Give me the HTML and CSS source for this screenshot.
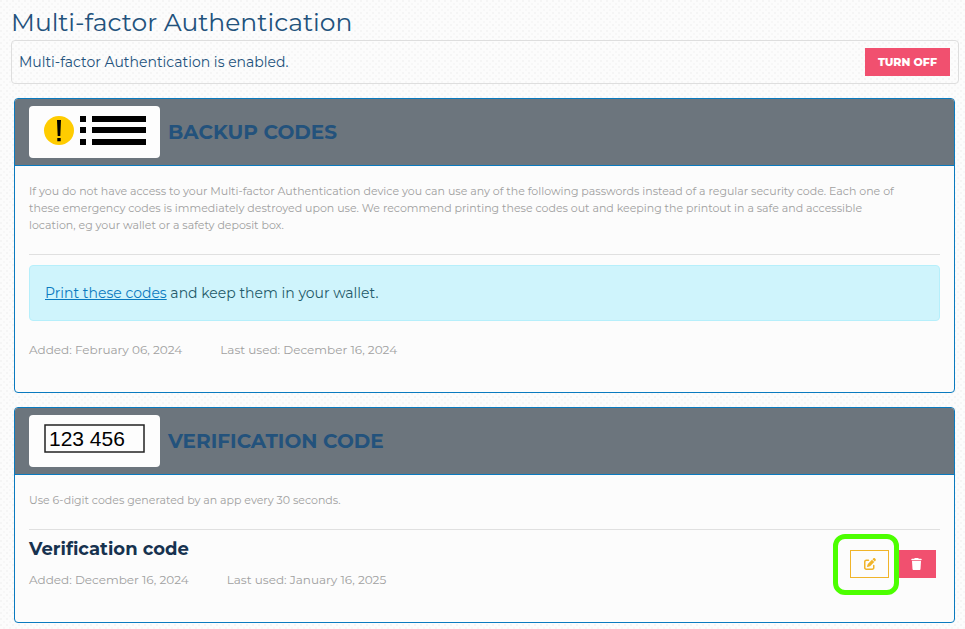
FILE: index.html
```html
<!DOCTYPE html>
<html lang="en">
<head>
<meta charset="utf-8">
<title>Multi-factor Authentication</title>
<link rel="stylesheet" href="styles.css">
</head>
<body>
<main class="page">
  <h1 class="page-title">Multi-factor Authentication</h1>
  <div class="status">
    <span>Multi-factor Authentication is enabled.</span>
    <button class="btn btn-danger" type="button">TURN OFF</button>
  </div>

  <section class="card">
    <header class="card-header">
      <svg class="logo" viewBox="0 0 131 52" aria-hidden="true">
        <ellipse cx="30" cy="24.500" rx="15" ry="14.500" fill="#fc0"/>
        <path d="M28 14h4l-.7 16h-2.600zM28.300 32h3.400v3.200h-3.400z"/>
        <path d="M51 10h6v6h-6zM51 21h6v6h-6zM51 33h6v6h-6zM63 10h54v6H63zM63 21h54v6H63zM63 33h54v6H63z"/>
      </svg>
      <h2 class="card-title">BACKUP CODES</h2>
    </header>
    <div class="card-body">
      <p class="description">If you do not have access to your Multi-factor Authentication device you can use any of the following passwords instead of a regular security code. Each one of these emergency codes is immediately destroyed upon use. We recommend printing these codes out and keeping the printout in a safe and accessible location, eg your wallet or a safety deposit box.</p>
      <hr class="divider">
      <p class="notice"><a href="#print">Print these codes</a> and keep them in your wallet.</p>
      <div class="dates"><span>Added: February 06, 2024</span><span>Last used: December 16, 2024</span></div>
    </div>
  </section>

  <section class="card">
    <header class="card-header">
      <svg class="logo" viewBox="0 0 131 52" aria-hidden="true">
        <rect x="16" y="10" width="99" height="27" fill="none" stroke="#222" stroke-width="1.500"/>
        <text class="logo-digits" x="20" y="31">123 456</text>
      </svg>
      <h2 class="card-title">VERIFICATION CODE</h2>
    </header>
    <div class="card-body">
      <p class="description">Use 6-digit codes generated by an app every 30 seconds.</p>
      <hr class="divider">
      <div class="method">
        <div>
          <h3 class="method-title">Verification code</h3>
          <div class="dates"><span>Added: December 16, 2024</span><span>Last used: January 16, 2025</span></div>
        </div>
        <div class="actions">
          <span class="highlighted">
            <button class="btn btn-icon btn-edit" type="button" aria-label="Edit">
              <svg viewBox="0 0 512 512" width="12" height="12" aria-hidden="true"><path fill="currentColor" d="M471.600 21.700c-21.900-21.900-57.300-21.900-79.200 0L362.300 51.700l97.900 97.900 30.100-30.100c21.900-21.900 21.900-57.300 0-79.200L471.600 21.700zm-299.200 220c-6.100 6.100-10.800 13.600-13.500 21.900l-29.600 88.800c-2.900 8.600-.6 18.100 5.800 24.600s15.900 8.700 24.600 5.800l88.800-29.600c8.200-2.700 15.700-7.400 21.900-13.500L437.700 172.300 339.700 74.300 172.400 241.700zM96 64c-53 0-96 43-96 96v256c0 53 43 96 96 96h256c53 0 96-43 96-96v-96c0-17.700-14.300-32-32-32s-32 14.300-32 32v96c0 17.700-14.300 32-32 32H96c-17.700 0-32-14.300-32-32V160c0-17.700 14.300-32 32-32h96c17.700 0 32-14.300 32-32s-14.300-32-32-32H96z"/></svg>
            </button>
          </span>
          <button class="btn btn-icon btn-danger" type="button" aria-label="Delete">
            <svg viewBox="0 0 448 512" width="11" height="12" aria-hidden="true"><path fill="currentColor" d="M135.200 17.700L128 32H32C14.300 32 0 46.300 0 64s14.300 32 32 32h384c17.700 0 32-14.300 32-32s-14.300-32-32-32h-96l-7.200-14.300C307.400 6.800 296.300 0 284.200 0H163.800c-12.100 0-23.200 6.800-28.600 17.700zM416 128H32l21.200 339c1.600 25.300 22.600 45 47.900 45h245.800c25.300 0 46.300-19.700 47.900-45L416 128z"/></svg>
          </button>
        </div>
      </div>
    </div>
  </section>
</main>
</body>
</html>
```
FILE: styles.css
```css
* { box-sizing: border-box; }

body {
  margin: 0;
  background-color: #fcfcfc;
  background-image:
    radial-gradient(circle at 1px 1px, #f5f5f5 1px, transparent 1px),
    radial-gradient(circle at 4px 4px, #f7f7f7 1px, transparent 1px);
  background-size: 6px 6px;
  color: #23527c;
  font-family: Montserrat, Inter, "Open Sans", sans-serif;
  font-size: 14px;
  line-height: 24px;
}

h1, h2, h3, p { margin: 0; }

.page { padding: 4px 6px 6px 11px; }

.page-title {
  font-size: 25px;
  font-weight: 400;
  line-height: 36px;
}

.status {
  display: flex;
  align-items: center;
  justify-content: space-between;
  height: 44px;
  padding: 0 8px 0 7px;
  border: 1px solid #dedede;
  border-radius: 4px;
}

.btn {
  height: 28px;
  padding: 0 12px;
  border: 1px solid transparent;
  font: inherit;
  font-size: 11px;
  font-weight: 800;
  line-height: 16px;
  cursor: pointer;
}

.btn-danger { background: #f1506f; color: #fff; }

.card {
  margin: 14px 4px 0 3px;
  background: #fcfcfc;
  border: 1px solid #0a7abf;
  border-radius: 4px;
  overflow: hidden;
}

.card-header {
  display: flex;
  align-items: center;
  gap: 8px;
  padding: 7px 14px;
  background: #6c757d;
  border-bottom: 1px solid #0a7abf;
}

.logo {
  width: 131px;
  height: 52px;
  background: #fdfdfd;
  border-radius: 4px;
}

.logo-digits { font-family: "Liberation Sans", Arial, sans-serif; font-size: 21px; }

.card-title {
  font-size: 20px;
  font-weight: 700;
  line-height: 24px;
}

.card-body { padding: 17px 14px 34px; }

.description, .dates {
  color: #a0a0a0;
  font-size: 12px;
  line-height: 17px;
}

.description {
  padding-right: 32px;
  font-size: 11px;
}

.divider {
  height: 1px;
  margin: 20px 0 10px;
  border: 0;
  background: #e0e0e0;
}

.notice {
  margin-bottom: 20px;
  padding: 15px;
  background: #cff4fc;
  border: 1px solid #b6effb;
  border-radius: 4px;
  color: #235a69;
}

.notice a { color: #0a7abf; }

.dates { display: flex; gap: 38px; }

.method {
  display: flex;
  justify-content: space-between;
}

.method-title {
  margin-bottom: 13px;
  color: #17324f;
  font-size: 18px;
  font-weight: 700;
  line-height: 18px;
}

.actions {
  display: flex;
  align-items: center;
  gap: 8px;
  padding-right: 4px;
}

.btn-icon {
  display: flex;
  align-items: center;
  justify-content: center;
  width: 39px;
  padding: 0;
}

.btn-edit { background: #fcfcfc; border-color: #f0b429; color: #f0b429; }

.highlighted { position: relative; }

.highlighted::after {
  content: "";
  position: absolute;
  inset: -16px -10px -17px -17px;
  border: 5px solid #4cff00;
  border-radius: 12px;
  pointer-events: none;
}
```
